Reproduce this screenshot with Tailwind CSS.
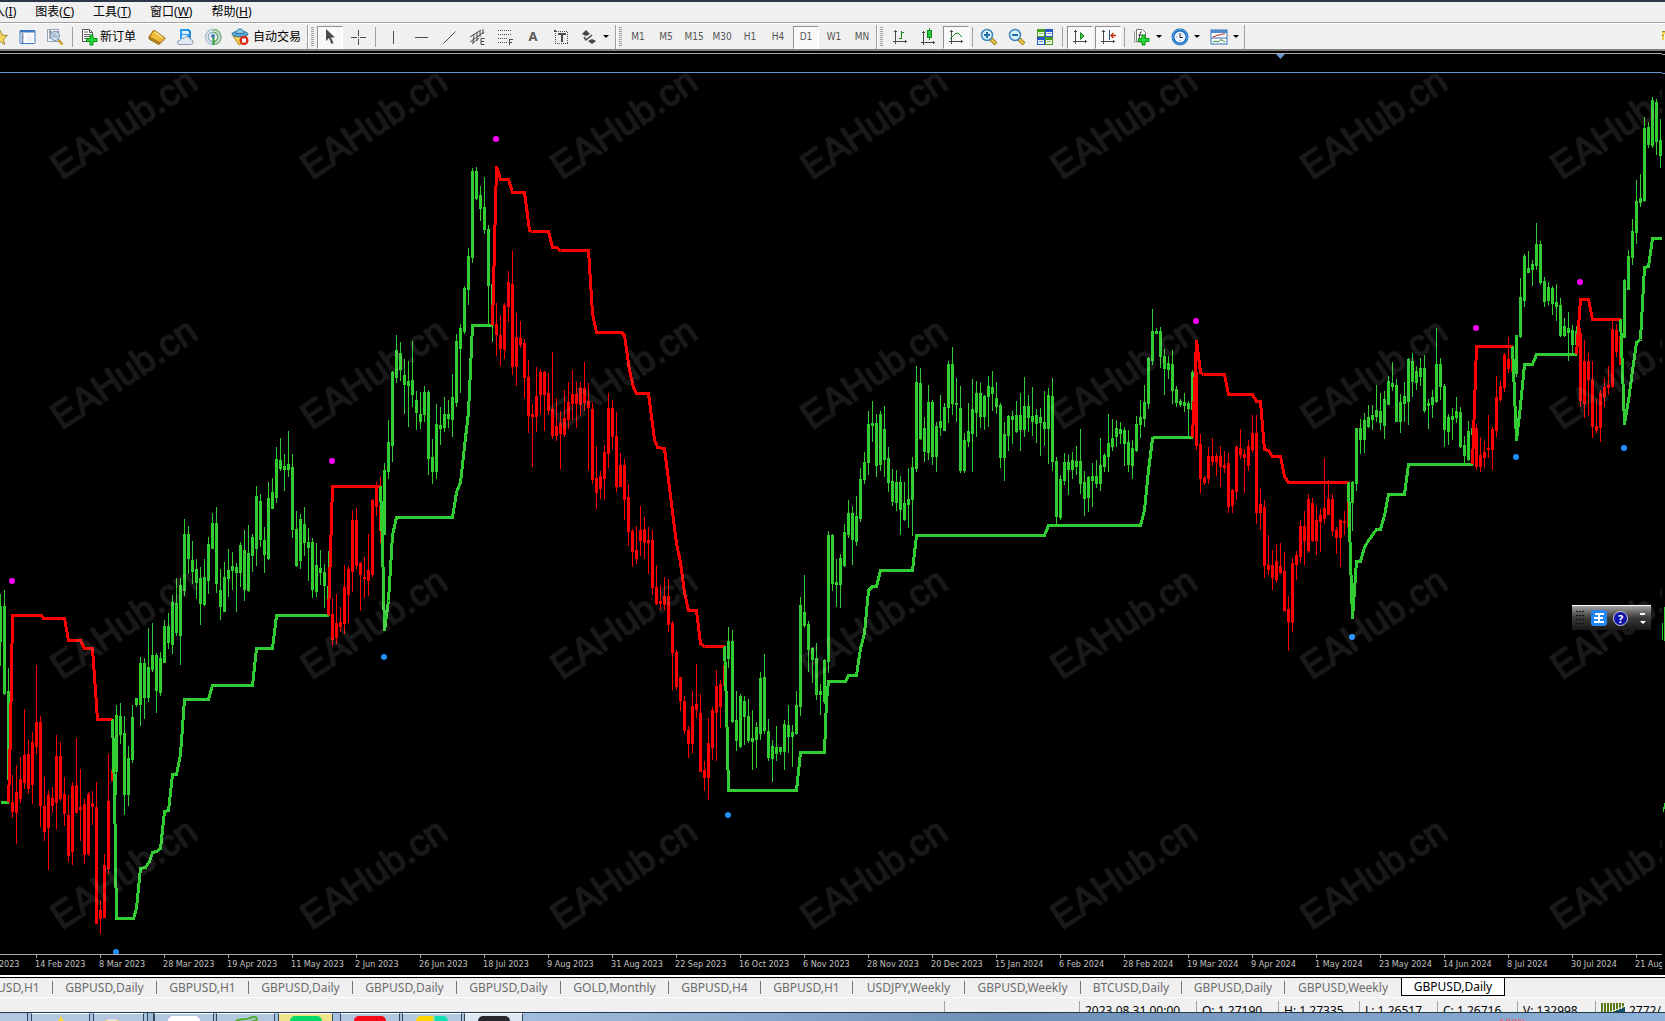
<!DOCTYPE html>
<html lang="zh-CN">
<head>
    <meta charset="UTF-8">
    <meta name="viewport" content="width=device-width, initial-scale=1.0">
    <title>GBPUSD,Daily</title>
    <script src="https://cdn.jsdelivr.net/npm/@tailwindcss/browser@4"></script>
</head>
<body class="h-screen flex flex-col overflow-hidden bg-black text-xs text-black font-['Noto_Sans','Noto_Sans_CJK_SC',sans-serif]">

    <!-- Menu bar -->
    <nav class="h-[23px] shrink-0 flex items-center gap-[19px] bg-[#f0f0f0] border-t-2 border-t-[#2b3648] border-b border-b-[#a0a0a0] overflow-hidden whitespace-nowrap">
        <button class="-ml-[7px] shrink-0">入(<u>I</u>)</button>
        <button class="shrink-0">图表(<u>C</u>)</button>
        <button class="shrink-0">工具(<u>T</u>)</button>
        <button class="shrink-0">窗口(<u>W</u>)</button>
        <button class="shrink-0">帮助(<u>H</u>)</button>
    </nav>

    <!-- Toolbar -->
    <div class="h-[26px] shrink-0 flex items-center pt-px bg-[#f0f0f0] border-t border-t-white overflow-hidden whitespace-nowrap">
        <div class="h-full shrink-0 flex items-center w-[308px] border-r border-r-[#a0a0a0]">
            <button class="w-[13px] h-full flex items-center justify-start overflow-hidden" aria-label="Favorites">
                <svg class="shrink-0 -ml-2" width="16" height="16" viewBox="0 0 16 16"><path d="M8 1l2 5 5.500.5-4 3.700 1.200 5.300L8 12.500l-4.700 3 1.200-5.300-4-3.700L6 6z" fill="#f8d75a" stroke="#a98a3c"/></svg>
            </button>
            <button class="w-7 h-full flex items-center justify-center" aria-label="Market watch">
                <svg width="17" height="16" viewBox="0 0 17 16"><rect x="1" y="1.500" width="15" height="13" rx="1" fill="#fff" stroke="#3877c2"/><path d="M1 2.500h15" stroke="#3877c2" stroke-width="2"/><path d="M2 4h3v10H2z" fill="#bcd6f3"/><path d="M3 5h1M3 11h1" stroke="#d22"/><path d="M3 7h1M3 9h1M3 13h1" stroke="#222"/><path d="M7 6h7M7 8h7M7 10h7M7 12h7" stroke="#dde6f0"/></svg>
            </button>
            <button class="w-7 h-full flex items-center justify-center" aria-label="Data window">
                <svg width="18" height="18" viewBox="0 0 18 18"><rect x="1.500" y="1.500" width="11" height="12" fill="#f4f6f9" stroke="#96a3b5"/><path d="M3 4h3M4 2v9M8 3v3M11 3v3" stroke="#667"/><circle cx="9" cy="8" r="4.500" fill="#cfe4f4" fill-opacity=".85" stroke="#6a93b8"/><path d="M7 6v4M9 5v5M11 7v3" stroke="#8a9db0"/><path d="M12.500 12l4 4.500" stroke="#c99a2c" stroke-width="2.500"/></svg>
            </button>
            <span class="w-px h-[20px] bg-[#a0a0a0] mx-[3px]"></span>
            <button class="w-[67px] h-full flex items-center gap-[2px] pl-[5px]">
                <svg class="shrink-0" width="17" height="18" viewBox="0 0 17 18"><path d="M1.500 1.500h7l3 3v9h-10z" fill="#fff" stroke="#555"/><path d="M8.500 1.500v3h3" fill="none" stroke="#555"/><path d="M3 4h4M3 6.500h6M3 8.500h6M3 10.500h4" stroke="#666"/><path d="M9 7h3v3.500h4v3h-4V17H9v-3.500H5.500v-3H9z" fill="#23dd35" stroke="#079013"/></svg>
                新订单
            </button>
            <button class="w-7 h-full flex items-center justify-center" aria-label="MetaEditor">
                <svg width="18" height="16" viewBox="0 0 18 16"><path d="M6 1L17 9l-5 5L1 8z" fill="#eebb38" stroke="#a8761a"/><path d="M6 1l-5 7v2l9.500 5.500 1.500-1.500L1.500 8" fill="#c58b20" stroke="#9a6d18"/><path d="M12 14l5-5v1.500L11 15.500z" fill="#fff3c8" stroke="#9a6d18" stroke-width=".6"/><path d="M6.500 3L14 8.500" stroke="#ffe694" stroke-width="1.500"/></svg>
            </button>
            <button class="w-7 h-full flex items-center justify-center" aria-label="VPS">
                <svg width="18" height="18" viewBox="0 0 18 18"><path d="M4 1h9l2 2v9H4z" fill="#2b9bf0"/><path d="M6 3h7v3H6zM6 7h5v3H6z" fill="#d7efff"/><path d="M11 2l3 2v8" fill="none" stroke="#1370bf"/><path d="M3 16.500h11.500a2.500 2.500 0 0 0 0-5 3.500 3.500 0 0 0-6.500-1 3 3 0 0 0-4 2 2 2 0 0 0-1 4z" fill="#e3eaf3" stroke="#8d9cb3"/></svg>
            </button>
            <button class="w-7 h-full flex items-center justify-center" aria-label="Signals">
                <svg width="18" height="18" viewBox="0 0 18 18" fill="none"><circle cx="9" cy="9" r="7.500" stroke="#a9c4dc" stroke-width="1.500"/><circle cx="9" cy="9" r="4.800" stroke="#8db2c8" stroke-width="1.500"/><path d="M9 1.500a7.500 7.500 0 0 1 1 15" stroke="#85bd86" stroke-width="1.500"/><path d="M9 4.200a4.800 4.800 0 0 1 1 9.500" stroke="#69ae6c" stroke-width="1.500"/><circle cx="9" cy="8" r="2" fill="#447fc4"/><path d="M9.500 9v8" stroke="#2f9b3b" stroke-width="2"/></svg>
            </button>
            <button class="h-full flex items-center gap-1 pl-1">
                <svg class="shrink-0" width="18" height="18" viewBox="0 0 18 18"><path d="M2 8l14-1-3 8-5 2z" fill="#f6d155" stroke="#b58e24"/><ellipse cx="9" cy="6" rx="8" ry="2.800" fill="#5aa9d6" stroke="#2f789f"/><path d="M5 5.500c0-6 8-6 8 0z" fill="#8cc9e8" stroke="#2f789f"/><circle cx="13" cy="12.500" r="4.500" fill="#dc2717"/><rect x="11" y="10.500" width="4" height="4" fill="#fff"/></svg>
                自动交易
            </button>
        </div>

        <div class="h-full shrink-0 flex items-center w-[308px] border-l border-l-white border-r border-r-[#a0a0a0]">
            <span class="w-[3px] h-[20px] mx-[2px] shrink-0 bg-[repeating-linear-gradient(#a0a0a0_0_1px,transparent_1px_2px)]"></span>
            <button class="w-7 h-full flex items-center justify-center" aria-label="Cursor">
                <span class="w-[26px] h-[23px] flex items-center justify-center bg-[#f9f9f9] border-t border-l border-t-[#909090] border-l-[#909090] border-r border-b border-r-white border-b-white"><svg width="10" height="16" viewBox="0 0 10 16"><path d="M1 0v12l3-3 2.500 6 2-1L6 8.500h4z" fill="#4b4b4b"/></svg></span>
            </button>
            <button class="w-7 h-full flex items-center justify-center" aria-label="Crosshair">
                <svg width="17" height="17" viewBox="0 0 17 17" shape-rendering="crispEdges"><path d="M8.500 1v6M8.500 10v6M1 8.500h6M10 8.500h6" stroke="#4b4b4b"/><path d="M8 8h1v1H8z" fill="#4b4b4b"/></svg>
            </button>
            <span class="w-px h-[20px] bg-[#a0a0a0] mx-[3px]"></span>
            <button class="w-7 h-full flex items-center justify-center" aria-label="Vertical line">
                <svg width="17" height="17" shape-rendering="crispEdges"><path d="M8.500 2v13" stroke="#4b4b4b"/></svg>
            </button>
            <button class="w-7 h-full flex items-center justify-center" aria-label="Horizontal line">
                <svg width="17" height="17" shape-rendering="crispEdges"><path d="M2 8.500h13" stroke="#4b4b4b"/></svg>
            </button>
            <button class="w-7 h-full flex items-center justify-center" aria-label="Trendline">
                <svg width="17" height="17"><path d="M2.500 14.500L14.500 2.500" stroke="#4b4b4b"/></svg>
            </button>
            <button class="w-7 h-full flex items-center justify-center" aria-label="Equidistant channel">
                <svg width="17" height="17" stroke="#4b4b4b" fill="none"><path d="M1 8L12 1M1 13L15 3M3 15L10 9M5 5l-1 9M8 3v9M11 2v6M14 0v5"/><path d="M15.500 9.500h-3.500v6h3.500M12 12.500h3"/></svg>
            </button>
            <button class="w-7 h-full flex items-center justify-center" aria-label="Fibonacci">
                <svg width="17" height="17" stroke="#4b4b4b" fill="none" shape-rendering="crispEdges"><path d="M1 1.500h14M1 5.500h14M1 9.500h9M1 13.500h9" stroke-dasharray="1 1"/><path d="M12.500 16v-6M12 10.500h4M12 13.500h3"/></svg>
            </button>
            <button class="w-7 h-full flex items-center justify-center text-[13px] font-bold text-[#5a5a5a]">A</button>
            <button class="w-7 h-full flex items-center justify-center" aria-label="Text label">
                <svg width="16" height="16" viewBox="0 0 16 16" fill="none" shape-rendering="crispEdges"><path d="M2.500 2.500h12v12h-12z" stroke="#4b4b4b" stroke-dasharray="1 1"/><path d="M1 1h2v2H1z" fill="#4b4b4b"/><path d="M5 5h8M9 5v8" stroke="#4b4b4b" stroke-width="2"/></svg>
            </button>
            <button class="w-7 h-full flex items-center justify-center" aria-label="Arrows">
                <svg width="16" height="16" viewBox="0 0 16 16"><path d="M1 5l4-4 4 4-4 2zM7 12l4 3 4-3-4-2z" fill="#444"/><path d="M3 8l2 3 6-5" fill="none" stroke="#444" stroke-width="1.500"/></svg>
            </button>
            <svg width="6" height="4" class="shrink-0"><path d="M0 0h6L3 3z"/></svg>
        </div>

        <div class="h-full shrink-0 flex items-center w-[261px] border-l border-l-white border-r border-r-[#a0a0a0] text-[10px] text-[#555] font-['DejaVu_Sans_Condensed','DejaVu_Sans',sans-serif]">
            <span class="w-[3px] h-[20px] mx-[2px] shrink-0 bg-[repeating-linear-gradient(#a0a0a0_0_1px,transparent_1px_2px)]"></span>
            <button class="w-7 h-full shrink-0">M1</button>
            <button class="w-7 h-full shrink-0">M5</button>
            <button class="w-7 h-full shrink-0">M15</button>
            <button class="w-7 h-full shrink-0">M30</button>
            <button class="w-7 h-full shrink-0">H1</button>
            <button class="w-7 h-full shrink-0">H4</button>
            <button class="w-[26px] mx-px h-[23px] shrink-0 bg-[#f9f9f9] border-t border-l border-t-[#909090] border-l-[#909090] border-r border-b border-r-white border-b-white">D1</button>
            <button class="w-7 h-full shrink-0">W1</button>
            <button class="w-7 h-full shrink-0">MN</button>
        </div>

        <div class="h-full shrink-0 flex items-center w-[368px] border-l border-l-white border-r border-r-[#a0a0a0]">
            <span class="w-[3px] h-[20px] ml-[2px] mr-[3px] shrink-0 bg-[repeating-linear-gradient(#a0a0a0_0_1px,transparent_1px_2px)]"></span>
            <button class="w-7 h-full flex items-center justify-center" aria-label="Bar chart">
                <svg width="16" height="16" viewBox="0 0 16 16" shape-rendering="crispEdges" fill="none" stroke="#4b4b4b"><path d="M3.500 1v14M1 12.500h14M2 2.500h3M13.500 11v3"/><path d="M9.500 2v8M7 9.500h2M10 3.500h2" stroke="#178a1c"/></svg>
            </button>
            <button class="w-7 h-full flex items-center justify-center" aria-label="Candlesticks">
                <svg width="16" height="18" viewBox="0 0 16 18" shape-rendering="crispEdges" fill="none" stroke="#4b4b4b"><path d="M3.500 3v14M1 14.500h14M2 4.500h3M13.500 13v3"/><path d="M9.500 0v12" stroke="#178a1c"/><rect x="7.500" y="2.500" width="4" height="7" fill="#27c840" stroke="#178a1c"/></svg>
            </button>
            <button class="w-7 h-full flex items-center justify-center" aria-label="Line chart">
                <span class="w-[26px] h-[23px] flex items-center justify-center bg-[#f9f9f9] border-t border-l border-t-[#909090] border-l-[#909090] border-r border-b border-r-white border-b-white"><svg width="16" height="16" viewBox="0 0 16 16" fill="none" stroke="#4b4b4b"><path d="M3.500 1v14M1 12.500h14M2 2.500h3M13.500 11v3" shape-rendering="crispEdges"/><path d="M2 10l5-5 3-1 4 4" stroke="#178a1c"/></svg></span>
            </button>
            <span class="w-px h-[20px] bg-[#a0a0a0] mx-[2px]"></span>
            <button class="w-7 h-full flex items-center justify-center" aria-label="Zoom in">
                <svg width="18" height="18" viewBox="0 0 18 18"><path d="M10 10l6 6" stroke="#a07c1c" stroke-width="4"/><path d="M10.500 10.500l5 5" stroke="#f0cd4b" stroke-width="2"/><circle cx="7" cy="7" r="5.500" fill="#d7f0fc" stroke="#3c86bd" stroke-width="1.500"/><path d="M4 7h6M7 4v6" stroke="#246ea6" stroke-width="2"/></svg>
            </button>
            <button class="w-7 h-full flex items-center justify-center" aria-label="Zoom out">
                <svg width="18" height="18" viewBox="0 0 18 18"><path d="M10 10l6 6" stroke="#a07c1c" stroke-width="4"/><path d="M10.500 10.500l5 5" stroke="#f0cd4b" stroke-width="2"/><circle cx="7" cy="7" r="5.500" fill="#d7f0fc" stroke="#3c86bd" stroke-width="1.500"/><path d="M4 7h6" stroke="#246ea6" stroke-width="2"/></svg>
            </button>
            <button class="w-7 h-full flex items-center justify-center" aria-label="Tile windows">
                <svg width="16" height="16" viewBox="0 0 16 16" shape-rendering="crispEdges"><path d="M0 0h8v8H0zM8 8h8v8H8z" fill="#4a9e1e"/><path d="M8 0h8v8H8zM0 8h8v8H0z" fill="#2458c9"/><path d="M1 3h6v4H1zM9 3h6v4H9zM1 11h6v4H1zM9 11h6v4H9z" fill="#f0f6ee"/><path d="M2 4.500h4M10 12.500h4" stroke="#7cc35c"/><path d="M10 4.500h4M2 12.500h4" stroke="#6d95e6"/></svg>
            </button>
            <span class="w-px h-[20px] bg-[#a0a0a0] mx-[3px]"></span>
            <button class="w-7 h-full flex items-center justify-center" aria-label="Auto scroll">
                <span class="w-[26px] h-[23px] flex items-center justify-center bg-[#f9f9f9] border-t border-l border-t-[#909090] border-l-[#909090] border-r border-b border-r-white border-b-white"><svg width="16" height="16" viewBox="0 0 16 16" fill="none" stroke="#4b4b4b"><path d="M3.500 1v14M1 12.500h14M2 2.500h3M13.500 11v3" shape-rendering="crispEdges"/><path d="M8.500 3.500v7L12 7z" fill="#35c748" stroke="#178a1c"/></svg></span>
            </button>
            <button class="w-7 h-full flex items-center justify-center" aria-label="Chart shift">
                <span class="w-[26px] h-[23px] flex items-center justify-center bg-[#f9f9f9] border-t border-l border-t-[#909090] border-l-[#909090] border-r border-b border-r-white border-b-white"><svg width="16" height="16" viewBox="0 0 16 16" fill="none" stroke="#4b4b4b"><path d="M3.500 1v14M1 12.500h14M2 2.500h3M13.500 11v3" shape-rendering="crispEdges"/><path d="M9.500 1v10" stroke="#1c5d9c"/><path d="M11 6.500h5M13.500 4L11 6.500 13.500 9" stroke="#c43612" stroke-width="1.500"/></svg></span>
            </button>
            <span class="w-px h-[20px] bg-[#a0a0a0] mx-[2px]"></span>
            <button class="w-[39px] h-full flex items-center gap-[6px] pl-[6px]" aria-label="Indicators">
                <svg class="shrink-0" width="17" height="18" viewBox="0 0 17 18"><path d="M3.500 1.500h6l3 3v9h-9z" fill="#fff" stroke="#777"/><path d="M1.500 3v11h8" fill="none" stroke="#999"/><path d="M9 4H7.500L6 11M5 7h4" fill="none" stroke="#444"/><path d="M9 7h3v3.500h4v3h-4V17H9v-3.500H5.500v-3H9z" fill="#23dd35" stroke="#079013"/></svg>
                <svg width="6" height="4" class="shrink-0"><path d="M0 0h6L3 3z"/></svg>
            </button>
            <button class="w-[39px] h-full flex items-center gap-[5px] pl-[5px]" aria-label="Periods">
                <svg class="shrink-0" width="18" height="18" viewBox="0 0 18 18"><circle cx="9" cy="9" r="7" fill="#eef6ff" stroke="#1763b5" stroke-width="3"/><circle cx="9" cy="9" r="7.300" fill="none" stroke="#5cb2ee"/><path d="M9 5v4.500h3" fill="none" stroke="#333"/><path d="M5 9h1M9 13v-1M6 6l.5.5M12 6l-.5.5" stroke="#888"/></svg>
                <svg width="6" height="4" class="shrink-0"><path d="M0 0h6L3 3z"/></svg>
            </button>
            <button class="w-[36px] h-full flex items-center gap-[5px] pl-[5px]" aria-label="Templates">
                <svg class="shrink-0" width="18" height="16" viewBox="0 0 18 16"><rect x="1" y="1" width="16" height="14" fill="#fff" stroke="#3471b5"/><path d="M1 2.500h16" stroke="#4d8bd0" stroke-width="3"/><path d="M1 9h16" stroke="#3471b5"/><path d="M3 7.500h2l2-1.500h3l2-1h3" fill="none" stroke="#b1281a"/><path d="M3 13l3-1 2 1 3-2.500 4 2.500" fill="none" stroke="#2a8e34"/></svg>
                <svg width="6" height="4" class="shrink-0"><path d="M0 0h6L3 3z"/></svg>
            </button>
        </div>
        <svg class="ml-auto shrink-0" width="3" height="14" shape-rendering="crispEdges"><path d="M0 1h3v3h-1v6H0z" fill="#f1d44e"/><path d="M0 1.500h3M0 5.500h2" stroke="#a98a3c"/></svg>
    </div>

    <!-- Chart window -->
    <main class="flex-1 min-h-0 flex border-t-2 border-t-[#808080] bg-black">
        <div class="flex-1 min-w-0 flex flex-col pt-[2px]">
            <div class="relative flex-1 min-h-0 border-t border-t-[#a9a9a9] overflow-hidden">
                <svg id="chart" class="block w-full h-full" role="img" aria-label="GBPUSD Daily">
                    <g transform="translate(0 -54)">
                        <path d="M1276 54h9l-4.500 5z" fill="#6b95cf"/>
                        <path d="M0 72.500h4000" stroke="#6b95cf" shape-rendering="crispEdges"/>
                        <g id="candles" shape-rendering="crispEdges"></g>
                        <g id="trend" fill="none" stroke-width="3" shape-rendering="crispEdges" transform="translate(.5 .5)"></g>
                        <g id="signals"></g>
                        <g id="marks" opacity=".1" fill="#fff" stroke="#fff" stroke-width="1.500" stroke-linejoin="round" font-family="Liberation Sans, sans-serif" font-size="37" text-anchor="middle"></g>
                    </g>
                </svg>

                <!-- Input method bar -->
                <div class="absolute right-[11px] top-[551px] w-[79px] h-[25px] flex items-center gap-[6px] pl-1 border-t border-t-white bg-linear-to-b from-[#a2a2a2] via-[#393939] to-[#191919]">
                    <svg width="9" height="17"><path d="M1 1v16M4 1v16M7 1v16" stroke="#111" stroke-width="2" stroke-dasharray="1 3"/></svg>
                    <button class="size-4 rounded-[3px] bg-[#2287f5] flex items-center justify-center" aria-label="Input mode">
                        <svg width="12" height="12" fill="none" stroke="#fff" stroke-width="2"><path d="M2 2h9M1 6h9M1 10h10M6 2v8"/></svg>
                    </button>
                    <button class="size-[15px] rounded-full bg-[#1014a8] border border-[#c8c8d8] text-white text-[11px] leading-none font-bold flex items-center justify-center">?</button>
                    <svg class="ml-1" width="9" height="13" fill="#fff"><path d="M2 1h5v2H2zM2 9h6l-3 3z"/></svg>
                </div>
            </div>
            <div id="axis" class="h-[21px] shrink-0 flex border-t border-t-[#a9a9a9] overflow-hidden text-[9px] leading-[18px] text-[#c0c0c0] font-['DejaVu_Sans_Condensed','DejaVu_Sans',sans-serif]"></div>
        </div>
        <svg class="w-[3px] h-full shrink-0" shape-rendering="crispEdges">
            <path d="M0 3.500h3" stroke="#a9a9a9"/><path d="M0 22.500h3" stroke="#6b95cf"/>
            <path d="M.5 572v17M2.500 556v34M1.500 756v5M2.500 752v6" stroke="#32cd32"/>
        </svg>
    </main>

    <!-- Chart tabs -->
    <div class="h-[22px] shrink-0 flex bg-[#f0f0f0] border-t-2 border-t-white overflow-hidden text-[#6d6d6d] whitespace-nowrap">
        <div id="tabs" class="flex-1 flex border-t border-t-black overflow-hidden"></div>
    </div>

    <!-- Status bar -->
    <footer class="h-[15px] shrink-0 flex justify-end border-t border-t-white bg-[#f0f0f0] overflow-hidden whitespace-nowrap leading-[20px]">
        <span class="w-[135px] shrink-0 mt-[3px] border-l border-l-[#a0a0a0]"></span>
        <span class="w-[117px] shrink-0 mt-[3px] pl-[5px] border-l border-l-[#a0a0a0]">2023.08.31 00:00</span>
        <span class="w-[82px] shrink-0 mt-[3px] pl-[5px] border-l border-l-[#a0a0a0]">O: 1.27190</span>
        <span class="w-[81px] shrink-0 mt-[3px] pl-[5px] border-l border-l-[#a0a0a0]">H: 1.27335</span>
        <span class="w-[78px] shrink-0 mt-[3px] pl-[5px] border-l border-l-[#a0a0a0]">L: 1.26517</span>
        <span class="w-[80px] shrink-0 mt-[3px] pl-[5px] border-l border-l-[#a0a0a0]">C: 1.26716</span>
        <span class="w-[78px] shrink-0 mt-[3px] pl-[5px] border-l border-l-[#a0a0a0]">V: 132998</span>
        <span class="w-[70px] shrink-0 mt-[3px] pl-[5px] border-l border-l-[#a0a0a0] flex gap-1">
            <svg class="mt-[2px] shrink-0" width="24" height="12" shape-rendering="crispEdges"><path d="M0 6h24" stroke="#597a12" stroke-width="12" stroke-dasharray="2 1"/><path d="M6 12l18-8v8z" fill="#14506b"/><path d="M5 11L24 3" stroke="#f0f0f0" shape-rendering="auto"/></svg>
            2772/
        </span>
    </footer>

    <!-- Taskbar -->
    <div class="h-[9px] shrink-0 flex border-t border-t-[#26384c] bg-linear-to-r from-[#a5c0df] from-30% via-[#6d8fb5] via-60% to-[#8fb2da] overflow-hidden">
        <button class="w-[28px] shrink-0 mr-[3px] border-r border-r-[#33475e] bg-[#b3c8e0]" aria-label="Window"></button>
        <button class="w-[59px] shrink-0 mr-[3px] border-x border-t border-[#33475e] border-t-white bg-[#b3c8e0] flex justify-center" aria-label="Alerts"><svg width="16" height="8"><path d="M8 2l7 12H1z" fill="#f9dd35"/></svg></button>
        <button class="w-[51px] shrink-0 mr-[3px] border-x border-t border-[#33475e] border-t-white bg-[#b3c8e0] pl-[11px]" aria-label="Files"><svg width="15" height="8"><path d="M0 6h14v2H0z" fill="#e5cf73"/><path d="M2 6h10" stroke="#fff"/></svg></button>
        <span class="w-[7px] shrink-0 border-x border-[#33475e] bg-[#9db8d6]"></span>
        <button class="w-[60px] shrink-0 mr-[2px] border-x border-t border-[#33475e] border-t-white bg-[#b3c8e0] flex justify-center items-end" aria-label="Documents"><span class="w-8 h-[5px] rounded-t-md bg-white"></span></button>
        <button class="w-[59px] shrink-0 mr-[3px] border-x border-t border-[#33475e] border-t-white bg-[#b3c8e0] flex justify-center" aria-label="Browser"><svg width="26" height="8" fill="none"><path d="M2 8c5-5 10-1 15-4 4-2 7-1 7 1s-4 2-7 3" stroke="#4fae32" stroke-width="2"/></svg></button>
        <button class="w-[55px] shrink-0 mr-[7px] border-x border-t border-[#33475e] border-t-white bg-[#efe28a] flex justify-center items-end" aria-label="Chat"><span class="w-8 h-[5px] rounded-t-md bg-[#07d668]"></span></button>
        <button class="w-[60px] shrink-0 mr-[2px] border-x border-t border-[#33475e] border-t-white bg-[#b3c8e0] flex justify-center items-end" aria-label="Music"><span class="w-8 h-[5px] rounded-t-md bg-[#f50a18]"></span></button>
        <button class="w-[60px] shrink-0 mr-[2px] border-x border-t border-[#33475e] border-t-white bg-[#b3c8e0] flex justify-center items-end" aria-label="Pictures"><span class="w-8 h-[5px] rounded-t-md bg-linear-to-r from-[#ffd500] from-50% to-[#12e0b4] to-60%"></span></button>
        <button class="w-[59px] shrink-0 border-x border-t border-[#33475e] border-t-white bg-[#dce7f3] flex justify-center items-end" aria-label="Terminal"><span class="w-8 h-[5px] rounded-t-md bg-[#28282c]"></span></button>
        <span class="ml-auto mr-[138px] mt-1 text-[11px] leading-none text-[#f0545c]">100%</span>
    </div>

    <script>
        const UP = '#32cd32', DOWN = '#ff0000';

        // One candle every 4px: high, body top, body bottom, low
        const candles = `
594,606,641,665 590,606,693,694 668,691,779,779 775,802,811,817 765,792,812,843 757,779,798,802 709,755,782,788 740,754,788,793
732,742,784,803 665,722,746,753 716,722,805,826 777,806,831,840 791,795,827,869 787,798,805,812 735,756,802,828 742,756,798,800
777,794,813,825 795,815,855,861 782,786,851,864 738,785,812,812 769,807,809,840 799,804,854,863 792,794,853,855 791,803,806,824
782,807,923,923 900,910,918,933 854,865,917,917 754,801,868,873 770,770,780,780 705,715,771,794 703,716,734,743 716,733,794,814
746,758,794,805 705,717,759,762 698,698,704,706 657,663,704,725 658,663,697,718 628,667,697,701 623,655,669,671 653,655,690,712
652,658,692,695 620,626,662,662 613,626,642,648 595,602,644,653 578,603,632,635 578,585,635,664 519,534,590,595 526,534,558,573
541,560,571,583 559,569,582,598 567,578,603,624 559,577,604,605 537,544,580,593 513,523,548,548 507,523,583,592 569,590,606,619
562,577,611,611 549,570,578,596 552,566,570,589 563,567,572,611 542,545,572,586 530,550,589,600 525,553,590,591 534,537,555,571
486,496,548,565 494,501,539,546 527,540,554,572 482,498,558,559 478,492,508,508 447,459,497,502 438,460,468,470 454,466,469,490
431,464,469,476 454,467,529,537 511,529,565,566 514,519,560,568 507,524,542,555 528,542,547,580 538,542,589,597 543,565,591,596
550,568,572,584 564,572,585,607 551,586,600,600 598,614,639,645 594,623,637,643 607,622,626,631 565,587,623,633 566,569,594,622
511,520,571,591 508,520,565,568 562,563,574,610 557,577,578,597 534,570,580,595 499,500,574,576 482,486,506,515 477,505,530,542
463,470,534,534 420,442,471,478 371,372,445,461 335,350,377,382 342,353,369,380 359,375,384,413 361,381,385,426 341,380,394,406
391,400,412,429 392,414,421,428 386,392,414,421 390,392,458,474 439,457,471,483 404,424,471,478 407,425,428,444 397,414,427,431
400,414,418,427 374,397,419,436 334,341,402,406 324,328,348,392 286,288,331,333 248,256,289,304 168,171,257,262 167,171,198,199
186,195,208,220 177,207,229,233 225,229,285,324 284,284,305,341 303,324,334,355 315,335,348,365 303,305,349,358 271,282,306,321
251,284,366,374 313,337,366,385 321,338,344,347 339,343,377,397 360,377,415,432 404,414,416,466 367,396,416,431 369,372,394,413
371,372,394,430 373,393,410,414 352,409,435,438 398,426,435,440 411,423,433,468 390,418,434,436 382,402,419,428 370,394,403,419
382,394,403,427 382,388,404,415 362,388,402,410 383,401,407,469 403,409,479,483 446,478,492,508 471,476,488,498 445,452,478,499
393,408,453,467 400,408,436,448 412,436,486,491 453,465,486,486 459,465,499,519 484,497,531,545 529,531,551,566 526,550,558,563
506,530,540,555 517,529,542,558 527,540,542,573 530,540,587,594 565,587,603,604 585,601,603,609 577,596,604,609 579,596,624,631
621,623,652,689 650,652,686,689 677,677,700,710 696,701,730,733 726,730,743,757 691,706,743,752 664,704,709,717 694,713,771,771
761,770,777,790 718,743,777,799 707,710,747,759 670,686,712,760 680,684,706,727 665,665,685,685 627,641,658,667 630,641,721,722
691,720,740,750 694,696,746,747 696,701,716,744 699,716,740,742 710,738,741,769 722,727,739,767 672,678,733,739 654,677,730,733
719,731,757,760 740,746,758,781 726,747,753,760 747,747,751,754 720,724,751,769 705,725,736,752 725,732,736,766 691,705,733,734
597,605,706,715 575,612,625,627 621,624,649,671 647,648,659,682 643,658,694,699 684,691,694,714 659,660,701,703 531,535,661,672
534,535,583,590 559,582,584,606 554,558,584,607 524,532,565,566 500,513,534,537 506,513,539,564 496,516,541,545 468,479,518,521
452,462,479,483 411,424,462,474 401,423,425,441 414,423,465,476 411,414,464,470 406,429,459,476 447,458,482,491 469,481,501,505
470,482,502,510 476,482,509,534 482,503,519,520 468,499,504,527 457,467,499,535 366,382,468,471 368,383,438,439 417,428,451,461
385,402,452,459 400,402,456,464 422,426,456,471 395,421,427,435 403,407,430,430 361,364,407,422 347,364,403,414 378,403,404,421
386,408,470,472 433,440,470,472 403,431,441,446 379,409,433,471 381,393,412,436 383,393,416,427 395,396,416,429 376,386,396,426
371,387,393,410 382,398,406,413 403,405,457,467 422,434,457,480 415,416,435,450 411,416,419,443 401,415,431,432 393,415,429,450
377,406,429,436 395,406,417,431 387,416,421,435 409,415,423,442 408,417,422,455 391,422,428,445 388,395,428,463 378,396,461,470
457,461,516,525 475,479,517,519 453,462,480,484 455,462,469,494 452,460,469,478 446,461,466,474 429,461,483,493 471,482,498,515
476,477,497,511 463,476,480,506 460,476,483,487 438,465,483,490 453,455,466,471 414,443,456,471 419,438,446,450 420,428,436,446
422,429,433,443 427,430,443,465 430,442,464,471 440,448,465,478 416,424,450,451 400,417,424,437 385,402,418,426 357,358,403,408
309,331,360,364 328,331,333,333 327,331,356,367 349,356,368,394 356,363,369,378 350,364,390,403 386,389,402,406 399,401,404,406
393,402,405,411 401,403,408,436 370,372,409,409 372,372,445,449 434,444,478,492 476,478,482,484 447,456,478,483 438,456,461,465
453,456,461,475 446,456,466,486 451,465,467,472 453,463,506,512 489,490,505,512 445,447,491,499 429,448,454,458 449,454,457,492
440,446,465,470 415,433,449,452 415,433,512,523 489,504,512,529 500,507,565,577 535,565,569,574 550,565,577,589 544,561,579,582
543,566,572,573 552,571,610,611 596,609,621,650 558,563,622,631 551,555,564,579 520,526,556,562 511,526,540,564 494,499,550,552
498,503,540,541 506,520,540,554 509,515,521,551 458,508,518,523 480,499,514,514 494,499,530,535 527,530,537,553 519,520,537,566
511,521,522,534 500,500,526,526 481,482,502,530 428,428,483,490 419,428,439,453 413,420,439,452 405,417,426,427 405,415,419,429
385,410,416,421 393,411,422,429 391,399,425,438 376,381,404,404 362,383,386,390 379,385,421,421 394,402,421,432 382,396,403,421
358,359,401,424 353,361,381,396 366,371,382,389 358,368,376,385 355,368,410,412 399,403,405,428 390,397,404,417 328,364,401,402
358,364,386,399 384,386,429,446 414,417,431,444 408,416,419,439 397,411,417,422 407,412,446,447 436,445,455,463 421,431,459,460
425,428,434,434 424,428,466,469 437,455,466,471 441,452,457,467 415,448,449,457 427,429,449,469 376,397,430,436 381,386,399,401
353,355,387,391 337,359,368,372 359,359,371,371 335,335,373,376 278,297,336,337 254,256,300,306 251,268,272,272 260,264,269,285
223,244,265,269 241,244,282,284 277,281,301,306 282,287,300,304 286,288,303,314 284,302,306,320 298,305,335,336 318,326,335,336
312,328,332,360 325,330,344,352 326,331,344,344 328,333,400,406 340,361,403,417 353,361,379,415 361,380,426,437 399,426,430,432
390,393,427,441 378,387,396,406 366,385,387,394 320,329,386,387 324,330,351,356 336,336,364,364 279,280,337,337 250,256,289,289
219,231,257,264 180,201,232,243 174,198,202,206 117,128,200,201 122,127,144,147 97,100,145,147 99,102,141,154 119,140,155,167
`.trim().split(/\s+/).map(c => c.split(',').map(Number));

        // First and last index of each falling stretch
        const falling = [[3, 28], [83, 95], [124, 181], [299, 337], [369, 378], [395, 405]];
        const isFalling = i => falling.some(([a, b]) => i >= a && i <= b);

        document.getElementById('candles').innerHTML = candles.map(([high, top, bottom, low], i) => {
            const x = i * 4;
            const color = isFalling(i) ? DOWN : UP;
            return `<rect x="${x}" y="${high}" width="1" height="${low - high + 1}" fill="${color}"/>` +
                `<rect x="${x - 1}" y="${top}" width="3" height="${bottom - top + 1}" fill="${color}"/>`;
        }).join('');

        const trend = [
            [UP, '0,802 8,802'],
            [DOWN, '8,802 10,732 12,615 41,615 43,618 64,618 68,640 80,640 84,648 92,648 97,719 112,719'],
            [UP, '112,719 114,790 116,918 133,918 136,908 140,868 145,867 149,861 152,852 156,851 160,848 164,811 168,810 172,774 176,774 180,754 184,699 208,699 212,685 252,685 256,648 272,648 276,615 328,615'],
            [DOWN, '328,615 332,486 380,486'],
            [UP, '380,486 382,545 384,630 388,600 392,535 396,517 452,517 456,492 460,482 464,446 468,412 472,325 492,325'],
            [DOWN, '492,325 496,166 500,179 508,179 512,192 524,192 529,230 532,231 548,231 552,247 556,247 560,250 588,250 592,313 596,332 621,332 624,335 629,370 633,387 636,393 648,393 654,439 657,447 664,448 676,543 680,562 684,592 688,610 696,610 700,643 704,646 724,646'],
            [UP, '724,646 726,705 728,790 796,790 800,752 824,752 826,700 828,681 845,681 848,675 856,675 860,648 864,633 868,590 872,586 876,586 880,570 912,570 916,535 1044,535 1048,525 1140,525 1144,510 1148,470 1152,438 1154,437 1192,437'],
            [DOWN, '1192,437 1196,340 1200,372 1203,374 1224,374 1228,394 1252,394 1256,401 1260,401 1264,449 1268,450 1272,456 1280,456 1284,476 1288,482 1348,482'],
            [UP, '1348,482 1350,560 1352,618 1356,561 1360,561 1364,547 1368,540 1376,529 1380,529 1384,515 1388,494 1404,494 1408,464 1472,464'],
            [DOWN, '1472,464 1476,346 1512,346'],
            [UP, '1512,346 1516,440 1520,405 1524,364 1532,364 1536,354 1576,354'],
            [DOWN, '1576,354 1580,299 1588,299 1592,319 1620,319'],
            [UP, '1620,319 1622,370 1624,424 1628,400 1632,370 1636,342 1640,339 1644,267 1648,266 1652,238 1663,238']
        ];
        document.getElementById('trend').innerHTML = trend.map(([color, points]) =>
            `<polyline points="${points}" stroke="${color}"/>`).join('');

        const sells = [[12, 581], [332, 461], [496, 139], [1196, 321], [1476, 328], [1580, 282]];
        const buys = [[116, 952], [384, 657], [728, 815], [1352, 637], [1516, 457], [1624, 448]];
        const dot = color => ([x, y]) => `<circle cx="${x}" cy="${y}" r="3" fill="${color}"/>`;
        document.getElementById('signals').innerHTML =
            sells.map(dot('#ff00ff')).join('') + buys.map(dot('#1e90ff')).join('');

        // Watermark tiles
        let marks = '';
        for (let y = 124; y < 954; y += 250) {
            for (let x = 124; x < 1700; x += 250) {
                marks += `<text transform="translate(${x} ${y}) rotate(-34)" y="12">EAHub.cn</text>`;
            }
        }
        document.getElementById('marks').innerHTML = marks;

        const dates = ['23 Jan 2023', '14 Feb 2023', '8 Mar 2023', '28 Mar 2023', '19 Apr 2023', '11 May 2023', '2 Jun 2023',
            '26 Jun 2023', '18 Jul 2023', '9 Aug 2023', '31 Aug 2023', '22 Sep 2023', '16 Oct 2023', '6 Nov 2023', '28 Nov 2023',
            '20 Dec 2023', '15 Jan 2024', '6 Feb 2024', '28 Feb 2024', '19 Mar 2024', '9 Apr 2024', '1 May 2024', '23 May 2024',
            '14 Jun 2024', '8 Jul 2024', '30 Jul 2024', '21 Aug 2024'];
        document.getElementById('axis').innerHTML = dates.map((d, i) =>
            `<span class="w-16 shrink-0 whitespace-nowrap ${i ? '' : '-ml-[29px]'}"><i class="block w-px h-[3px] ml-px -mb-[3px] bg-[#a9a9a9]"></i>${d}</span>`).join('');

        const tabs = [
            ['GBPUSD,H1', 'w-[92px]'], ['GBPUSD,Daily', 'w-[104px]'], ['GBPUSD,H1', 'w-[92px]'], ['GBPUSD,Daily', 'w-[104px]'],
            ['GBPUSD,Daily', 'w-[104px]'], ['GBPUSD,Daily', 'w-[104px]'], ['GOLD,Monthly', 'w-[108px]'], ['GBPUSD,H4', 'w-[92px]'],
            ['GBPUSD,H1', 'w-[92px]'], ['USDJPY,Weekly', 'w-[112px]'], ['GBPUSD,Weekly', 'w-[116px]'], ['BTCUSD,Daily', 'w-[101px]'],
            ['GBPUSD,Daily', 'w-[103px]'], ['GBPUSD,Weekly', 'w-[116px]'], ['GBPUSD,Daily', 'w-[104px]']
        ];
        document.getElementById('tabs').innerHTML = tabs.map(([name, width], i) => {
            const active = i === tabs.length - 1;
            const look = active
                ? 'h-[18px] bg-white text-black border-x border-b border-black'
                : 'h-[13px] mt-[3px]' + (i < tabs.length - 2 ? ' border-r border-r-[#777]' : '');
            return `<button class="${width} ${look} shrink-0 flex items-center justify-center ${i ? '' : '-ml-[39px]'}">${name}</button>`;
        }).join('');
    </script>
</body>
</html>
